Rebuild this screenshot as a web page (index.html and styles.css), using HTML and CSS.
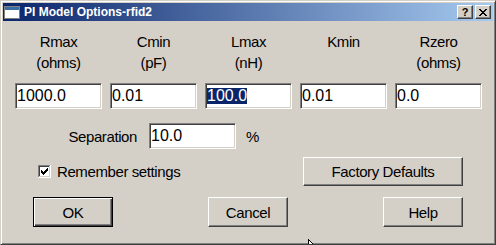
FILE: index.html
```html
<!DOCTYPE html>
<html>
<head>
<meta charset="utf-8">
<link rel="stylesheet" href="styles.css">
</head>
<body>
<div class="window">
  <div class="titlebar">
    <svg class="appicon" width="16" height="16" viewBox="0 0 16 16" shape-rendering="crispEdges">
      <rect x="0" y="2" width="16" height="13" fill="#808080"/>
      <rect x="1" y="3" width="14" height="11" fill="#ffffff"/>
      <rect x="1" y="3" width="14" height="3" fill="#3a6ea5"/>
    </svg>
    <span class="title">PI Model Options-rfid2</span>
    <div class="caption-btns">
      <span class="cbtn">?</span>
      <span class="cbtn">
        <svg width="8" height="7" viewBox="0 0 8 7" shape-rendering="crispEdges">
          <path d="M0 0h2v1h-2zM6 0h2v1h-2zM1 1h2v1h-2zM5 1h2v1h-2zM2 2h4v1h-4zM3 3h2v1h-2zM2 4h4v1h-4zM1 5h2v1h-2zM5 5h2v1h-2zM0 6h2v1h-2zM6 6h2v1h-2z" fill="#000"/>
        </svg>
      </span>
    </div>
  </div>
  <div class="client">
    <div class="params">
      <div class="param"><div class="plabel">Rmax<br>(ohms)</div><div class="field">1000.0</div></div>
      <div class="param"><div class="plabel">Cmin<br>(pF)</div><div class="field">0.01</div></div>
      <div class="param"><div class="plabel">Lmax<br>(nH)</div><div class="field"><span class="sel">100.0</span></div></div>
      <div class="param"><div class="plabel">Kmin</div><div class="field">0.01</div></div>
      <div class="param"><div class="plabel">Rzero<br>(ohms)</div><div class="field">0.0</div></div>
    </div>
    <div class="seprow">
      <span class="seplabel">Separation</span>
      <div class="field sepfield">10.0</div>
      <span class="pct">%</span>
    </div>
    <div class="checkrow">
      <svg class="chk" width="13" height="13" viewBox="0 0 13 13" shape-rendering="crispEdges">
        <rect x="0" y="0" width="13" height="13" fill="#ffffff"/>
        <rect x="0" y="0" width="12" height="1" fill="#808080"/>
        <rect x="0" y="0" width="1" height="12" fill="#808080"/>
        <rect x="1" y="1" width="10" height="1" fill="#404040"/>
        <rect x="1" y="1" width="1" height="10" fill="#404040"/>
        <rect x="1" y="11" width="11" height="1" fill="#d4d0c8"/>
        <rect x="11" y="1" width="1" height="11" fill="#d4d0c8"/>
        <path d="M3 5h1v3h-1zM4 6h1v3h-1zM5 7h1v3h-1zM6 6h1v3h-1zM7 5h1v3h-1zM8 4h1v3h-1zM9 3h1v3h-1z" fill="#000"/>
      </svg>
      <span class="chklabel">Remember settings</span>
      <button class="btn factory">Factory Defaults</button>
    </div>
    <div class="btnrow">
      <button class="btn default">OK</button>
      <button class="btn">Cancel</button>
      <button class="btn">Help</button>
    </div>
  </div>
  <svg class="cursor" width="12" height="19" viewBox="0 0 12 19" shape-rendering="crispEdges">
    <path d="M0.5 0.5 L0.5 15.5 L4 12 L7 18 L9 17 L6.5 11.5 L11 11.5 Z" fill="#fff" stroke="#000" stroke-width="1"/>
  </svg>
</div>
</body>
</html>
```

FILE: styles.css
```css
* {
  box-sizing: border-box;
}

html, body {
  margin: 0;
  padding: 0;
  background: #d4d0c8;
}

body {
  font-family: "Liberation Sans", Arial, sans-serif;
  color: #000;
}

.window {
  position: relative;
  width: 496px;
  height: 245px;
  overflow: hidden;
  background: #d4d0c8;
  border: 1px solid;
  border-color: #d4d0c8 #404040 #404040 #d4d0c8;
  box-shadow: inset 1px 1px #ffffff, inset -1px -1px #808080;
  padding: 2px;
  display: flex;
  flex-direction: column;
}

.titlebar {
  height: 18px;
  flex: none;
  display: flex;
  align-items: center;
  background: linear-gradient(to right, #0a246a, #a6caf0);
  padding: 0 2px 0 1px;
}

.appicon {
  flex: none;
}

.title {
  margin-left: 4px;
  flex: 1;
  color: #fff;
  font-weight: bold;
  font-size: 12px;
  white-space: nowrap;
}

.caption-btns {
  display: flex;
  gap: 2px;
}

.cbtn {
  width: 16px;
  height: 14px;
  background: #d4d0c8;
  border: 1px solid;
  border-color: #ffffff #404040 #404040 #ffffff;
  box-shadow: inset -1px -1px #808080;
  display: flex;
  align-items: center;
  justify-content: center;
  font-weight: bold;
  font-size: 11px;
  line-height: 12px;
  color: #000;
}

.client {
  flex: 1;
  display: flex;
  flex-direction: column;
  padding-top: 10px;
  font-size: 15px;
  letter-spacing: -0.4px;
}

.params {
  display: grid;
  grid-template-columns: repeat(5, 87px);
  column-gap: 8px;
  margin-left: 12px;
}

.param {
  display: flex;
  flex-direction: column;
}

.plabel {
  height: 42px;
  line-height: 21px;
  text-align: center;
}

.field {
  margin-top: 10px;
  height: 26px;
  background: #fff;
  border: 1px solid;
  border-color: #808080 #ffffff #ffffff #808080;
  box-shadow: inset 1px 1px #404040, inset -1px -1px #d4d0c8;
  font-size: 16px;
  letter-spacing: 0;
  line-height: 24px;
  padding-left: 1px;
  white-space: nowrap;
  overflow: hidden;
}

.sel {
  display: inline-block;
  line-height: 16px;
  background: #0a246a;
  color: #fff;
}

.seprow {
  display: flex;
  align-items: center;
  margin-top: 14px;
  height: 26px;
}

.seplabel {
  width: 134px;
  text-align: right;
}

.sepfield {
  margin-top: 0;
  margin-left: 12px;
  width: 87px;
}

.pct {
  margin-left: 10px;
}

.checkrow {
  display: flex;
  align-items: center;
  margin-top: 8px;
  height: 29px;
  padding-left: 35px;
  padding-right: 30px;
}

.chk {
  flex: none;
}

.chklabel {
  margin-left: 6px;
}

.btn {
  font-family: "Liberation Sans", Arial, sans-serif;
  font-size: 15px;
  letter-spacing: -0.4px;
  color: #000;
  background: #d4d0c8;
  border: 1px solid;
  border-color: #ffffff #404040 #404040 #ffffff;
  box-shadow: inset -1px -1px #808080;
  padding: 0;
  width: 80px;
  height: 30px;
}

.factory {
  margin-left: auto;
  width: 160px;
  height: 29px;
}

.btn.default {
  border-color: #000;
  box-shadow: inset 1px 1px #ffffff, inset -1px -1px #404040, inset -2px -2px #808080;
}

.btnrow {
  display: flex;
  justify-content: space-between;
  margin-top: 11px;
  padding: 0 30px;
}

.cursor {
  position: absolute;
  left: 307px;
  top: 238px;
}
```
